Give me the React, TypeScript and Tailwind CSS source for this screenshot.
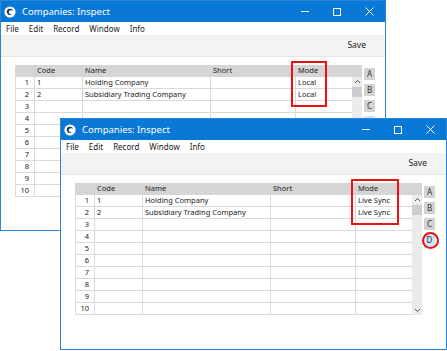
import React from 'react';

type Props = {
  left: number;
  top: number;
  width: number;
  height: number;
  modes: string[];
  boxWidth: number;
  circle?: boolean;
};

const rows = [
  { code: '1', name: 'Holding Company' },
  { code: '2', name: 'Subsidiary Trading Company' },
  ...Array.from({ length: 8 }, () => ({ code: '', name: '' })),
];

const Logo = () => (
  <svg width="12" height="12" viewBox="0 0 12 12">
    <circle cx="6" cy="6" r="5.6" fill="#ffffff" />
    <path d="M3 4.2 C4.5 2.2 8.2 2.4 9 4.8 C7.6 3.8 5.6 4 4.9 5.6 C4.4 7 5.6 8.6 7.6 8.4 C5.2 10 2.2 8.2 3 4.2 Z" fill="#1b3a5c" />
  </svg>
);

const Window = ({ left, top, width, height, modes, boxWidth, circle }: Props) => {
  return (
    <div
      className="absolute flex flex-col bg-white border border-[#2b86d9] font-['Noto_Sans',sans-serif] text-[#222]"
      style={{ left, top, width, height }}
    >
      {/* title bar */}
      <div className="flex items-center h-[21px] bg-[#0a78d7] text-white shrink-0">
        <div className="pl-[3px] pr-[6px] flex items-center">
          <Logo />
        </div>
        <span className="text-[9.5px] leading-none">Companies: Inspect</span>
        <div className="ml-auto flex h-full">
          <div className="w-[32px] flex items-center justify-center">
            <div className="w-[8px] h-px bg-white" />
          </div>
          <div className="w-[32px] flex items-center justify-center">
            <div className="w-[8px] h-[8px] border border-white" />
          </div>
          <div className="w-[32px] flex items-center justify-center">
            <svg width="9" height="9" viewBox="0 0 9 9">
              <path d="M0.5 0.5 L8.5 8.5 M8.5 0.5 L0.5 8.5" stroke="#fff" strokeWidth="1" />
            </svg>
          </div>
        </div>
      </div>

      {/* menu */}
      <div className="flex items-center h-[13px] gap-[10px] pl-[5px] text-[8px] leading-none shrink-0">
        <span>File</span>
        <span>Edit</span>
        <span>Record</span>
        <span>Window</span>
        <span>Info</span>
      </div>

      {/* toolbar */}
      <div className="flex items-center justify-end h-[22px] bg-[#f3f3f3] border-b border-[#e6e6e6] pr-[19px] text-[8.5px] shrink-0">
        <span>Save</span>
      </div>

      {/* table */}
      <div className="flex ml-[14px] mt-[8px] text-[7.5px] leading-none">
        <div className="flex flex-col">
          <div className="flex h-[12px] bg-[#d5d5d5] items-center w-[347px]">
            <div className="w-[20px]" />
            <div className="w-[48px] pl-[2px]">Code</div>
            <div className="w-[128px] pl-[2px]">Name</div>
            <div className="w-[85px] pl-[2px]">Short</div>
            <div className="w-[56px] pl-[2px]">Mode</div>
          </div>
          <div className="flex">
            <div className="flex flex-col border-l border-[#dadada]">
              {rows.map((r, i) => (
                <div key={i} className="flex h-[12px] border-b border-[#dadada]">
                  <div className="w-[19px] border-r border-[#dadada] pr-[5px] flex items-center justify-end">{i + 1}</div>
                  <div className="w-[48px] border-r border-[#dadada] pl-[2px] flex items-center">{r.code}</div>
                  <div className="w-[128px] border-r border-[#dadada] pl-[2px] flex items-center">{r.name}</div>
                  <div className="w-[85px] border-r border-[#dadada]" />
                  <div className="w-[56px] pl-[2px] flex items-center">{modes[i] ?? ''}</div>
                </div>
              ))}
            </div>
            <div className="w-[10px] bg-[#ebebeb] flex flex-col items-center">
              <svg width="7" height="10" viewBox="0 0 7 10" className="shrink-0">
                <path d="M1 6 L3.5 3.5 L6 6" stroke="#555" fill="none" strokeWidth="1" />
              </svg>
              <div className="w-[10px] h-[10px] bg-[#cdcdcd]" />
              <div className="flex-1" />
              <svg width="7" height="9" viewBox="0 0 7 9" className="shrink-0">
                <path d="M1 3 L3.5 5.5 L6 3" stroke="#555" fill="none" strokeWidth="1" />
              </svg>
            </div>
          </div>
        </div>
        <div className="flex flex-col gap-[4px] ml-[2px] mt-[3px] text-[8px] text-[#333]">
          <div className="w-[11px] h-[12px] bg-[#d3d3d3] flex items-center justify-center">A</div>
          <div className="w-[11px] h-[12px] bg-[#d3d3d3] flex items-center justify-center">B</div>
          <div className="w-[11px] h-[12px] bg-[#d3d3d3] flex items-center justify-center">C</div>
          <div className="w-[11px] h-[12px] bg-[#cce4f7] flex items-center justify-center">D</div>
        </div>
      </div>

      {/* highlight box over the Mode column */}
      <div
        className="absolute top-[60px] left-[290px] h-[46px] border-2 border-[#ee1111]"
        style={{ width: boxWidth }}
      />
      {circle && (
        <div className="absolute left-[361px] top-[113px] w-[17px] h-[17px] rounded-full border-2 border-[#ee1111]" />
      )}
    </div>
  );
}; 

export default function App() {
  return (
    <div className="relative w-[447px] h-[351px] bg-white overflow-hidden">
      <Window left={0} top={0} width={386} height={231} modes={['Local', 'Local']} boxWidth={36} />
      <Window left={60} top={118} width={387} height={232} modes={['Live Sync', 'Live Sync']} boxWidth={48} circle />
    </div>
  );
}
